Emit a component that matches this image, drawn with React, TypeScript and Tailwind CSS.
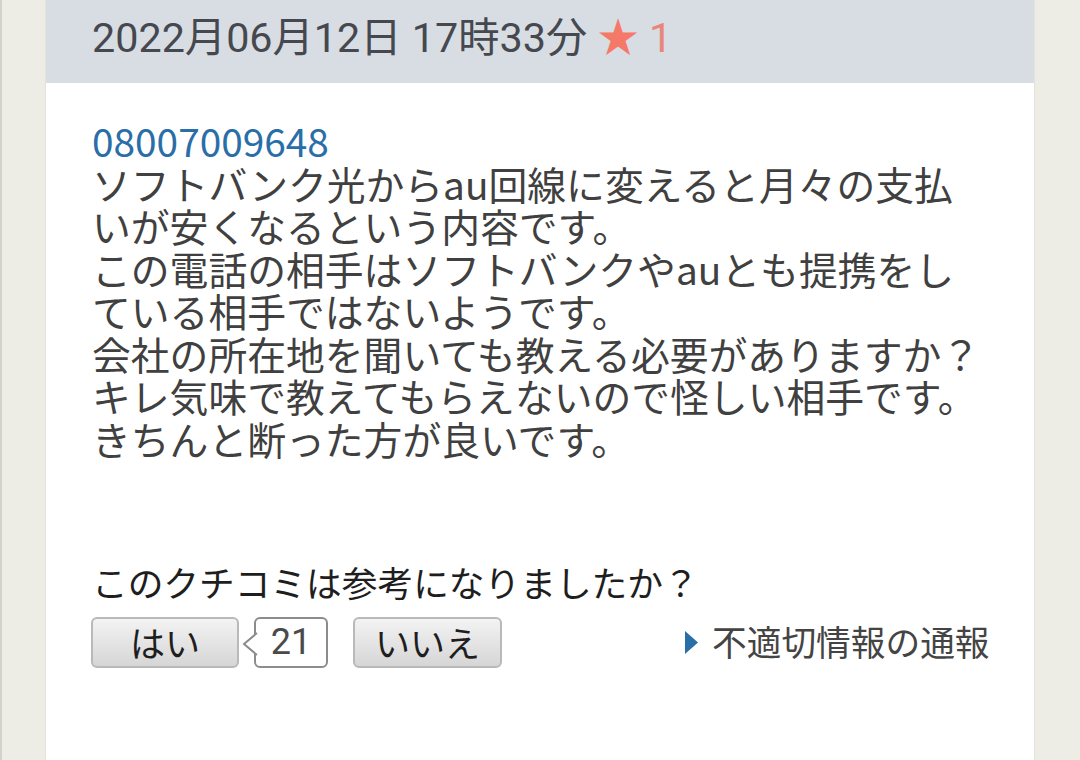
import React from "react";

const jp = { fontFamily: '"Noto Sans CJK JP", "Noto Sans", sans-serif' };
const hd = { fontFamily: 'Roboto, "Noto Sans CJK JP", sans-serif' };

function GrayButton({ label, w }: { label: string; w: string }) {
  return (
    <div
      className={`${w} h-[51px] rounded-[6px] border-2 border-[#b9b9b9] bg-gradient-to-b from-[#f3f3f3] to-[#d6d6d6] flex items-center justify-center text-[35px] text-[#1e1e1e] leading-none`}
    >
      <span className="-mt-[3px]">{label}</span>
    </div>
  );
}

export default function App() {
  const lines = [
    "ソフトバンク光からau回線に変えると月々の支払",
    "いが安くなるという内容です。",
    "この電話の相手はソフトバンクやauとも提携をし",
    "ている相手ではないようです。",
    "会社の所在地を聞いても教える必要がありますか？",
    "キレ気味で教えてもらえないので怪しい相手です。",
    "きちんと断った方が良いです。",
  ];
  return (
    <div
      className="w-[1080px] h-[760px] bg-[#edede6] flex border-l-2 border-[#d2d2ca] pl-[43px] pr-[45px] overflow-hidden"
      style={jp}
    >
      <div className="flex-1 flex flex-col bg-white border-x border-[#e2e2da]">
        <div
          className="h-[83px] bg-[#d8dce3] flex items-center pl-[46px] text-[41.3px] text-[#45484e] whitespace-nowrap"
          style={hd}
        >
          <span className="-mt-[6px]">
            2022月06月12日 17時33分{" "}
            <span className="text-[#f47968]">★</span>{" "}
            <span className="text-[#e9857a]">1</span>
          </span>
        </div>
        <div className="pl-[46px] pt-[36px] text-[38.8px] leading-[42.5px] text-[#404040] whitespace-nowrap">
          <span className="text-[#2a6ea8]">08007009648</span>
          {lines.map((l, i) => (
            <React.Fragment key={i}>
              <br />
              {l}
            </React.Fragment>
          ))}
        </div>
        <div className="pl-[46px] mt-[101px] text-[35.7px] leading-[44px] text-[#1e1e1e] whitespace-nowrap">
          このクチコミは参考になりましたか？
        </div>
        <div className="pl-[45px] mt-[13px] flex items-center">
          <GrayButton label="はい" w="w-[148px]" />
          <div className="relative ml-[15px] w-[74px] h-[51px] rounded-[6px] border-2 border-[#8c8c8c] bg-white flex items-center justify-center text-[36px] text-[#4a4a4a] leading-none" style={hd}>
            <svg
              className="absolute left-[-14px] top-[13px]"
              width="16"
              height="24"
              viewBox="0 0 16 24"
            >
              <path d="M15 1 L2 12 L15 23" fill="white" stroke="#8c8c8c" strokeWidth="2" />
            </svg>
            <span className="-mt-[2px]">21</span>
          </div>
          <div className="ml-[25px]">
            <GrayButton label="いいえ" w="w-[149px]" />
          </div>
          <div className="ml-[183px] flex items-center">
            <svg width="13" height="23" viewBox="0 0 13 23">
              <path d="M0 0 L13 11.5 L0 23 Z" fill="#2a6ea8" />
            </svg>
            <span className="ml-[14px] text-[34.7px] text-[#444] leading-none -mt-[3px]">
              不適切情報の通報
            </span>
          </div>
        </div>
      </div>
    </div>
  );
}
